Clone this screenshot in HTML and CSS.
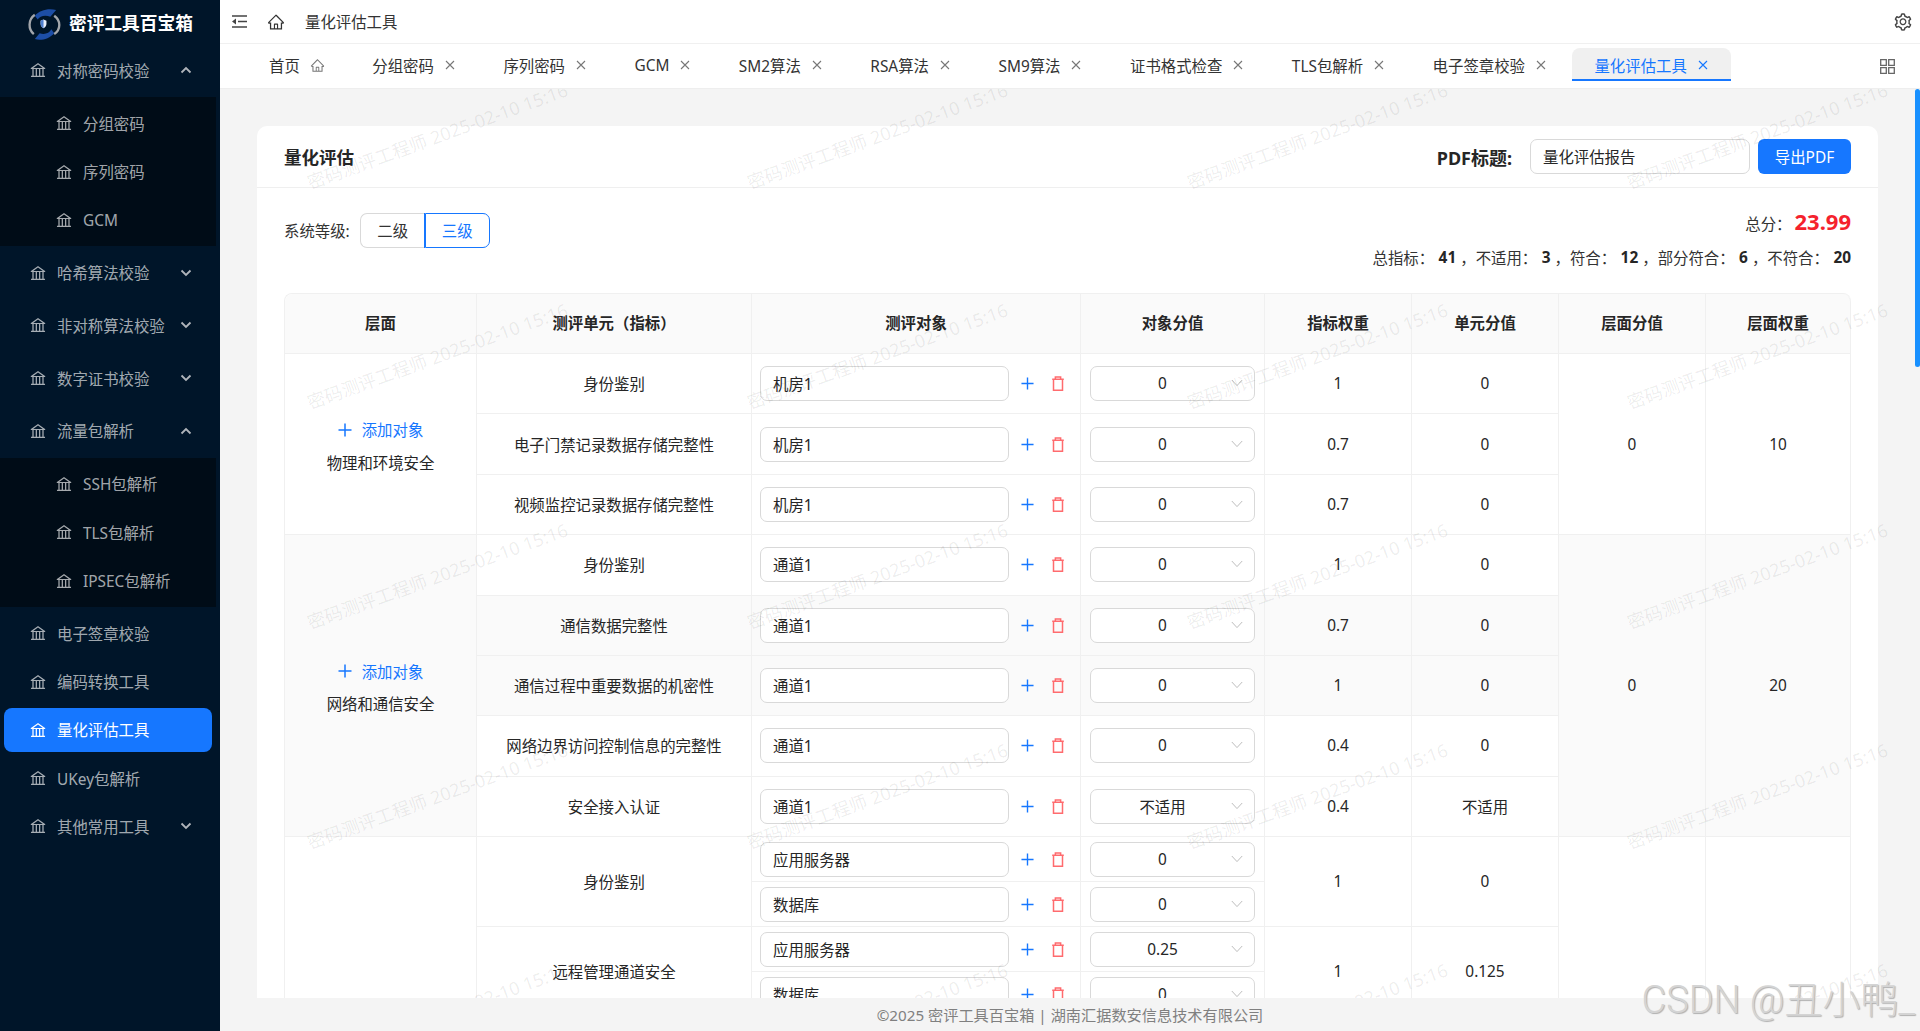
FILE: index.html
```html
<!DOCTYPE html>
<html lang="zh-CN">
<head>
<meta charset="utf-8">
<title>量化评估工具</title>
<link rel="stylesheet" href="styles.css">
</head>
<body>
<svg class="sprite" aria-hidden="true">
  <symbol id="bank" viewBox="0 0 1024 1024"><path fill="currentColor" d="M894 462c30.9 0 43.8-39.7 18.7-58L530.8 126.2a31.81 31.81 0 0 0-37.6 0L111.3 404c-25.1 18.2-12.2 58 18.8 58H192v374h-72c-4.4 0-8 3.6-8 8v52c0 4.4 3.6 8 8 8h784c4.4 0 8-3.6 8-8v-52c0-4.4-3.6-8-8-8h-72V462h62zM512 196.7l271.1 197.2H240.9L512 196.7zM264 462h117v374H264V462zm189 0h117v374H453V462zm307 374H642V462h118v374z"/></symbol>
  <symbol id="home" viewBox="0 0 1024 1024"><path fill="currentColor" d="M946.5 505L560.1 118.8l-25.9-25.9a31.5 31.5 0 0 0-44.4 0L77.5 505a63.9 63.9 0 0 0-18.8 46c.4 35.2 29.7 63.3 64.9 63.3h42.5V940h691.8V614.3h43.4c17.1 0 33.2-6.7 45.3-18.8a63.6 63.6 0 0 0 18.7-45.3c0-17-6.7-33.1-18.8-45.2zM568 868H456V664h112v204zm217.9-325.7V868H632V640c0-22.1-17.9-40-40-40H432c-22.1 0-40 17.9-40 40v228H238.1V542.3h-96l370-369.7 23.1 23.1L882 542.3h-96.1z"/></symbol>
  <symbol id="gear" viewBox="0 0 1024 1024"><path fill="currentColor" d="M924.8 625.7l-65.5-56c3.1-19 4.7-38.4 4.7-57.8s-1.6-38.8-4.7-57.8l65.5-56a32.03 32.03 0 0 0 9.3-35.2l-.9-2.6a443.74 443.74 0 0 0-79.7-137.9l-1.8-2.1a32.12 32.12 0 0 0-35.1-9.5l-81.3 28.9c-30-24.6-63.5-44-99.7-57.6l-15.7-85a32.05 32.05 0 0 0-25.8-25.7l-2.7-.5c-52.1-9.4-106.9-9.4-159 0l-2.7.5a32.05 32.05 0 0 0-25.8 25.7l-15.8 85.4a351.86 351.86 0 0 0-99 57.4l-81.9-29.1a32 32 0 0 0-35.1 9.5l-1.8 2.1a446.02 446.02 0 0 0-79.7 137.9l-.9 2.6c-4.5 12.5-.8 26.5 9.3 35.2l66.3 56.6c-3.1 18.8-4.6 38-4.6 57.1 0 19.2 1.5 38.4 4.6 57.1L99 625.5a32.03 32.03 0 0 0-9.3 35.2l.9 2.6c18.1 50.4 44.9 96.9 79.7 137.9l1.8 2.1a32.12 32.12 0 0 0 35.1 9.5l81.9-29.1c29.8 24.5 63.1 43.9 99 57.4l15.8 85.4a32.05 32.05 0 0 0 25.8 25.7l2.7.5a449.4 449.4 0 0 0 159 0l2.7-.5a32.05 32.05 0 0 0 25.8-25.7l15.7-85a350 350 0 0 0 99.7-57.6l81.3 28.9a32 32 0 0 0 35.1-9.5l1.8-2.1c34.8-41.1 61.6-87.5 79.7-137.9l.9-2.6c4.5-12.3.8-26.3-9.3-35zM788.3 465.9c2.5 15.1 3.8 30.6 3.8 46.1s-1.3 31-3.8 46.1l-6.6 40.1 74.7 63.9a370.03 370.03 0 0 1-42.6 73.6L721 702.8l-31.4 25.8c-23.9 19.6-50.5 35-79.3 45.8l-38.1 14.3-17.9 97a377.5 377.5 0 0 1-85 0l-17.9-97.2-37.8-14.5c-28.5-10.8-55-26.2-78.7-45.7l-31.4-25.9-93.4 33.2c-17-22.9-31.2-47.6-42.6-73.6l75.5-64.5-6.5-40c-2.4-14.9-3.7-30.3-3.7-45.5 0-15.3 1.2-30.6 3.7-45.5l6.5-40-75.5-64.5c11.3-26.1 25.6-50.7 42.6-73.6l93.4 33.2 31.4-25.9c23.7-19.5 50.2-34.9 78.7-45.7l37.9-14.3 17.9-97.2c28.1-3.2 56.8-3.2 85 0l17.9 97 38.1 14.3c28.7 10.8 55.4 26.2 79.3 45.8l31.4 25.8 92.8-32.9c17 22.9 31.2 47.6 42.6 73.6L781.8 426l6.5 39.9zM512 326c-97.2 0-176 78.8-176 176s78.8 176 176 176 176-78.8 176-176-78.8-176-176-176zm79.2 255.2A111.6 111.6 0 0 1 512 614c-29.9 0-58-11.7-79.2-32.8A111.6 111.6 0 0 1 400 502c0-29.9 11.7-58 32.8-79.2C454 401.6 482.1 390 512 390c29.9 0 58 11.6 79.2 32.8A111.6 111.6 0 0 1 624 502c0 29.9-11.7 58-32.8 79.2z"/></symbol>
  <symbol id="up" viewBox="0 0 12 8"><path d="M1.5 6.5 6 2l4.5 4.5" fill="none" stroke="currentColor" stroke-width="1.8"/></symbol>
  <symbol id="down" viewBox="0 0 12 8"><path d="M1.5 1.5 6 6l4.5-4.5" fill="none" stroke="currentColor" stroke-width="1.8"/></symbol>
  <symbol id="x" viewBox="0 0 12 12"><path d="M2 2l8 8M10 2l-8 8" fill="none" stroke="currentColor" stroke-width="1.1"/></symbol>
  <symbol id="plus" viewBox="0 0 14 14"><path d="M7 .5v13M.5 7h13" fill="none" stroke="currentColor" stroke-width="1.5"/></symbol>
  <symbol id="trash" viewBox="0 0 14 16"><path d="M.8 3.500h12.400M4.200 3.500V1h5.600v2.500M2.200 3.500v11.700h9.600V3.500" fill="none" stroke="currentColor" stroke-width="1.6"/></symbol>
  <symbol id="sel" viewBox="0 0 12 8"><path d="M.8 1 6 6.6 11.2 1" fill="none" stroke="currentColor" stroke-width="1"/></symbol>
</svg>

<aside class="sidebar">
  <div class="logo">
    <svg class="logo-mark" viewBox="8 4 34 34" aria-hidden="true">
      <path d="M15 12C8 17 8 27 14 32" fill="none" stroke="#a3a6ab" stroke-width="2.4"/>
      <path d="M35 13C42 18 42 27 35 32" fill="none" stroke="#a3a6ab" stroke-width="2.4"/>
      <path d="M15 13C20 7 29 5 37 7L31 14C26 12 20 13 18 17Z" fill="#1d4ea6"/>
      <path d="M35 31C30 37 21 39 15 37L20 31C25 33 30 31 32 27Z" fill="#1d4ea6"/>
      <path d="M24 17l3 1.200v3.300c0 2-1.300 3.400-3 4.500-1.700-1.100-3-2.500-3-4.500v-3.300Z" fill="#e8eefb"/>
      <path d="M24 17v9c-1.700-1.100-3-2.500-3-4.500v-3.300Z" fill="#4f7fd0"/>
    </svg>
    <span class="logo-text">密评工具百宝箱</span>
  </div>
  <nav class="menu">
    <div class="group open">
      <div class="item"><svg class="ic"><use href="#bank"/></svg><span>对称密码校验</span><svg class="chev"><use href="#up"/></svg></div>
      <div class="sub">
        <div class="item subitem"><svg class="ic"><use href="#bank"/></svg><span>分组密码</span></div>
        <div class="item subitem"><svg class="ic"><use href="#bank"/></svg><span>序列密码</span></div>
        <div class="item subitem"><svg class="ic"><use href="#bank"/></svg><span>GCM</span></div>
      </div>
    </div>
    <div class="group"><div class="item"><svg class="ic"><use href="#bank"/></svg><span>哈希算法校验</span><svg class="chev"><use href="#down"/></svg></div></div>
    <div class="group"><div class="item"><svg class="ic"><use href="#bank"/></svg><span>非对称算法校验</span><svg class="chev"><use href="#down"/></svg></div></div>
    <div class="group"><div class="item"><svg class="ic"><use href="#bank"/></svg><span>数字证书校验</span><svg class="chev"><use href="#down"/></svg></div></div>
    <div class="group open">
      <div class="item"><svg class="ic"><use href="#bank"/></svg><span>流量包解析</span><svg class="chev"><use href="#up"/></svg></div>
      <div class="sub">
        <div class="item subitem"><svg class="ic"><use href="#bank"/></svg><span>SSH包解析</span></div>
        <div class="item subitem"><svg class="ic"><use href="#bank"/></svg><span>TLS包解析</span></div>
        <div class="item subitem"><svg class="ic"><use href="#bank"/></svg><span>IPSEC包解析</span></div>
      </div>
    </div>
    <div class="item flat"><svg class="ic"><use href="#bank"/></svg><span>电子签章校验</span></div>
    <div class="item flat"><svg class="ic"><use href="#bank"/></svg><span>编码转换工具</span></div>
    <div class="item flat active"><svg class="ic"><use href="#bank"/></svg><span>量化评估工具</span></div>
    <div class="item flat"><svg class="ic"><use href="#bank"/></svg><span>UKey包解析</span></div>
    <div class="item flat"><svg class="ic"><use href="#bank"/></svg><span>其他常用工具</span><svg class="chev"><use href="#down"/></svg></div>
  </nav>
</aside>

<div class="main">
  <header class="topbar">
    <svg class="collapse" viewBox="0 0 15 13" aria-hidden="true"><path d="M0 1h15M6 6.500h9M0 12h15" fill="none" stroke="#444" stroke-width="1.400"/><path d="M4 3.500v6L0 6.500Z" fill="#444"/></svg>
    <svg class="home"><use href="#home"/></svg>
    <span class="crumb">量化评估工具</span>
    <svg class="gear"><use href="#gear"/></svg>
  </header>
  <div class="tabs">
    <div class="tab"><span>首页</span><svg class="tab-home"><use href="#home"/></svg></div>
    <div class="tab"><span>分组密码</span><svg class="tab-x"><use href="#x"/></svg></div>
    <div class="tab"><span>序列密码</span><svg class="tab-x"><use href="#x"/></svg></div>
    <div class="tab"><span>GCM</span><svg class="tab-x"><use href="#x"/></svg></div>
    <div class="tab"><span>SM2算法</span><svg class="tab-x"><use href="#x"/></svg></div>
    <div class="tab"><span>RSA算法</span><svg class="tab-x"><use href="#x"/></svg></div>
    <div class="tab"><span>SM9算法</span><svg class="tab-x"><use href="#x"/></svg></div>
    <div class="tab"><span>证书格式检查</span><svg class="tab-x"><use href="#x"/></svg></div>
    <div class="tab"><span>TLS包解析</span><svg class="tab-x"><use href="#x"/></svg></div>
    <div class="tab"><span>电子签章校验</span><svg class="tab-x"><use href="#x"/></svg></div>
    <div class="tab current"><span>量化评估工具</span><svg class="tab-x"><use href="#x"/></svg></div>
    <svg class="grid-ic" viewBox="0 0 15 15" aria-hidden="true"><path d="M.7.700h5.600v5.600H.7zM8.700.700h5.600v5.600H8.700zM.7 8.700h5.600v5.600H.7zM8.700 8.700h5.600v5.600H8.700z" fill="none" stroke="#666" stroke-width="1.300"/></svg>
  </div>

  <div class="content">
    <section class="card">
      <div class="card-head">
        <h1 class="card-title">量化评估</h1>
        <div class="head-tools">
          <span class="pdf-label">PDF标题:</span>
          <div class="field pdf-input">量化评估报告</div>
          <div class="btn">导出PDF</div>
        </div>
      </div>
      <div class="card-body">
        <div class="summary">
          <div class="level">
            <span>系统等级:</span>
            <div class="seg"><span class="seg-a">二级</span><span class="seg-b">三级</span></div>
          </div>
          <div class="score">
            <div class="total"><span>总分：</span><b>23.99</b></div>
            <div class="stats"><span>总指标：</span><b>41</b><span>，</span><span>不适用：</span><b>3</b><span>，</span><span>符合：</span><b>12</b><span>，</span><span>部分符合：</span><b>6</b><span>，</span><span>不符合：</span><b>20</b></div>
          </div>
        </div>
        <table class="sheet">
          <thead>
            <tr>
              <th class="c-layer">层面</th><th class="c-unit">测评单元（指标）</th><th class="c-obj">测评对象</th><th class="c-val">对象分值</th><th class="c-num">指标权重</th><th class="c-num">单元分值</th><th class="c-num">层面分值</th><th class="c-last">层面权重</th>
            </tr>
          </thead>
          <tbody>
            <tr class="row">
              <td rowspan="3"><div class="adder"><svg class="add-plus"><use href="#plus"/></svg><span>添加对象</span></div><div class="layer-name">物理和环境安全</div></td>
              <td>身份鉴别</td>
              <td><div class="obj"><div class="field obj-input">机房1</div><svg class="act-plus"><use href="#plus"/></svg><svg class="act-del"><use href="#trash"/></svg></div></td>
              <td><div class="field pick"><span>0</span><svg class="pick-ic"><use href="#sel"/></svg></div></td>
              <td>1</td><td>0</td><td rowspan="3">0</td><td rowspan="3">10</td>
            </tr>
            <tr class="row">
              <td>电子门禁记录数据存储完整性</td>
              <td><div class="obj"><div class="field obj-input">机房1</div><svg class="act-plus"><use href="#plus"/></svg><svg class="act-del"><use href="#trash"/></svg></div></td>
              <td><div class="field pick"><span>0</span><svg class="pick-ic"><use href="#sel"/></svg></div></td>
              <td>0.7</td><td>0</td>
            </tr>
            <tr class="row">
              <td>视频监控记录数据存储完整性</td>
              <td><div class="obj"><div class="field obj-input">机房1</div><svg class="act-plus"><use href="#plus"/></svg><svg class="act-del"><use href="#trash"/></svg></div></td>
              <td><div class="field pick"><span>0</span><svg class="pick-ic"><use href="#sel"/></svg></div></td>
              <td>0.7</td><td>0</td>
            </tr>
            <tr class="row">
              <td rowspan="5" class="shade"><div class="adder"><svg class="add-plus"><use href="#plus"/></svg><span>添加对象</span></div><div class="layer-name">网络和通信安全</div></td>
              <td>身份鉴别</td>
              <td><div class="obj"><div class="field obj-input">通道1</div><svg class="act-plus"><use href="#plus"/></svg><svg class="act-del"><use href="#trash"/></svg></div></td>
              <td><div class="field pick"><span>0</span><svg class="pick-ic"><use href="#sel"/></svg></div></td>
              <td>1</td><td>0</td><td rowspan="5" class="shade">0</td><td rowspan="5" class="shade">20</td>
            </tr>
            <tr class="row hot">
              <td>通信数据完整性</td>
              <td><div class="obj"><div class="field obj-input">通道1</div><svg class="act-plus"><use href="#plus"/></svg><svg class="act-del"><use href="#trash"/></svg></div></td>
              <td><div class="field pick"><span>0</span><svg class="pick-ic"><use href="#sel"/></svg></div></td>
              <td>0.7</td><td>0</td>
            </tr>
            <tr class="row hot">
              <td>通信过程中重要数据的机密性</td>
              <td><div class="obj"><div class="field obj-input">通道1</div><svg class="act-plus"><use href="#plus"/></svg><svg class="act-del"><use href="#trash"/></svg></div></td>
              <td><div class="field pick"><span>0</span><svg class="pick-ic"><use href="#sel"/></svg></div></td>
              <td>1</td><td>0</td>
            </tr>
            <tr class="row">
              <td>网络边界访问控制信息的完整性</td>
              <td><div class="obj"><div class="field obj-input">通道1</div><svg class="act-plus"><use href="#plus"/></svg><svg class="act-del"><use href="#trash"/></svg></div></td>
              <td><div class="field pick"><span>0</span><svg class="pick-ic"><use href="#sel"/></svg></div></td>
              <td>0.4</td><td>0</td>
            </tr>
            <tr class="row">
              <td>安全接入认证</td>
              <td><div class="obj"><div class="field obj-input">通道1</div><svg class="act-plus"><use href="#plus"/></svg><svg class="act-del"><use href="#trash"/></svg></div></td>
              <td><div class="field pick"><span>不适用</span><svg class="pick-ic"><use href="#sel"/></svg></div></td>
              <td>0.4</td><td>不适用</td>
            </tr>
            <tr class="mini">
              <td rowspan="4"></td>
              <td rowspan="2">身份鉴别</td>
              <td><div class="obj"><div class="field obj-input">应用服务器</div><svg class="act-plus"><use href="#plus"/></svg><svg class="act-del"><use href="#trash"/></svg></div></td>
              <td><div class="field pick"><span>0</span><svg class="pick-ic"><use href="#sel"/></svg></div></td>
              <td rowspan="2">1</td><td rowspan="2">0</td><td rowspan="4"></td><td rowspan="4"></td>
            </tr>
            <tr class="mini">
              <td><div class="obj"><div class="field obj-input">数据库</div><svg class="act-plus"><use href="#plus"/></svg><svg class="act-del"><use href="#trash"/></svg></div></td>
              <td><div class="field pick"><span>0</span><svg class="pick-ic"><use href="#sel"/></svg></div></td>
            </tr>
            <tr class="mini">
              <td rowspan="2">远程管理通道安全</td>
              <td><div class="obj"><div class="field obj-input">应用服务器</div><svg class="act-plus"><use href="#plus"/></svg><svg class="act-del"><use href="#trash"/></svg></div></td>
              <td><div class="field pick"><span>0.25</span><svg class="pick-ic"><use href="#sel"/></svg></div></td>
              <td rowspan="2">1</td><td rowspan="2">0.125</td>
            </tr>
            <tr class="mini">
              <td><div class="obj"><div class="field obj-input">数据库</div><svg class="act-plus"><use href="#plus"/></svg><svg class="act-del"><use href="#trash"/></svg></div></td>
              <td><div class="field pick"><span>0</span><svg class="pick-ic"><use href="#sel"/></svg></div></td>
            </tr>
          </tbody>
        </table>
      </div>
    </section>

    <div class="marks" aria-hidden="true">
      <span>密码测评工程师 2025-02-10 15:16</span><span>密码测评工程师 2025-02-10 15:16</span><span>密码测评工程师 2025-02-10 15:16</span><span>密码测评工程师 2025-02-10 15:16</span>
      <span>密码测评工程师 2025-02-10 15:16</span><span>密码测评工程师 2025-02-10 15:16</span><span>密码测评工程师 2025-02-10 15:16</span><span>密码测评工程师 2025-02-10 15:16</span>
      <span>密码测评工程师 2025-02-10 15:16</span><span>密码测评工程师 2025-02-10 15:16</span><span>密码测评工程师 2025-02-10 15:16</span><span>密码测评工程师 2025-02-10 15:16</span>
      <span>密码测评工程师 2025-02-10 15:16</span><span>密码测评工程师 2025-02-10 15:16</span><span>密码测评工程师 2025-02-10 15:16</span><span>密码测评工程师 2025-02-10 15:16</span>
      <span>密码测评工程师 2025-02-10 15:16</span><span>密码测评工程师 2025-02-10 15:16</span><span>密码测评工程师 2025-02-10 15:16</span><span>密码测评工程师 2025-02-10 15:16</span>
    </div>
    <div class="thumb"></div>
  </div>

  <footer class="foot">©2025 密评工具百宝箱 | 湖南汇据数安信息技术有限公司</footer>
</div>
<div class="csdn">CSDN @丑小鸭_</div>
</body>
</html>
```
FILE: styles.css
```css
* { box-sizing: border-box; }
html, body { height: 100%; }
body {
  margin: 0;
  display: flex;
  height: 1031px;
  overflow: hidden;
  font-family: "Noto Sans", "Noto Sans CJK SC", sans-serif;
  font-size: 15.4px;
  color: #262626;
  background: #f4f4f4;
}
.sprite { display: none; }

/* sidebar */
.sidebar { width: 220px; flex: none; background: #001529; color: rgba(255,255,255,.65); }
.logo { height: 48px; padding: 7px 0 0 28px; display: flex; align-items: flex-start; gap: 8px; }
.logo-mark { width: 33px; height: 33px; flex: none; }
.logo-text { font-size: 17.7px; font-weight: 700; color: #fff; line-height: 32px; white-space: nowrap; }
.menu { width: 216px; }
.group { margin-bottom: 8.75px; }
.group.open { margin-bottom: 4.5px; }
.item { height: 44px; display: flex; align-items: center; padding-left: 25px; margin: 0 4px; border-radius: 8px; position: relative; white-space: nowrap; }
.flat { margin-bottom: 4.25px; }
.ic { width: 18px; height: 18px; margin-right: 10px; flex: none; }
.chev { width: 12px; height: 8px; position: absolute; left: 176px; top: 18px; color: #b0b5bb; }
.group > .item { margin-bottom: 0; }
.sub { background: #000c17; margin-top: 5px; padding-top: 4px; display: flex; flex-direction: column; gap: 4.5px; height: 149px; }
.subitem { padding-left: 51px; }
.active { background: #1677ff; color: #fff; }

/* main */
.main { width: 1700px; flex: none; display: flex; flex-direction: column; height: 1031px; }
.topbar { height: 44px; flex: none; background: #fff; border-bottom: 1px solid #f0f0f0; display: flex; align-items: center; padding-left: 12px; }
.collapse { width: 15px; height: 13px; margin-right: 20px; }
.home { width: 18px; height: 18px; color: #333; margin-right: 20px; }
.crumb { color: #333; }
.gear { width: 20px; height: 20px; margin-left: auto; margin-right: 7px; color: #444; }
.tabs { height: 45px; flex: none; background: #fff; border-bottom: 1px solid #eee; display: flex; align-items: flex-start; padding: 4px 0 0 27px; gap: 3.5px; position: relative; }
.tab { height: 33px; padding: 3.5px 22px 0; display: flex; align-items: center; gap: 10px; color: #333; white-space: nowrap; border-bottom: 2px solid transparent; }
.tab-home { width: 15px; height: 15px; color: #777; }
.tab-x { width: 12px; height: 12px; color: #777; }
.current { background: #f0f0f0; color: #1677ff; border-bottom-color: #1677ff; border-radius: 8px 8px 0 0; }
.current .tab-x { color: #1677ff; }
.grid-ic { width: 15px; height: 15px; position: absolute; left: 1660px; top: 15px; }

/* content */
.content { flex: 1; min-height: 0; overflow: hidden; position: relative; padding: 37px 42px 0 37px; }
.card { background: #fff; border-radius: 10px 10px 0 0; height: 900px; overflow: hidden; }
.card-head { height: 62px; border-bottom: 1px solid #efefef; display: flex; align-items: center; justify-content: space-between; padding: 0 27px; }
.card-title { margin: 0; font-size: 17.5px; font-weight: 700; color: #262626; }
.head-tools { display: flex; align-items: center; }
.pdf-label { font-size: 18px; font-weight: 700; margin-right: 18px; white-space: nowrap; }
.field { border: 1px solid #d9d9d9; border-radius: 7px; background: #fff; display: flex; align-items: center; }
.pdf-input { width: 220px; height: 35px; padding-left: 12px; margin-right: 8px; }
.btn { width: 93px; height: 35px; background: #1677ff; color: #fff; border-radius: 6px; display: flex; align-items: center; justify-content: center; }
.card-body { padding: 0 27px; }
.summary { height: 105px; display: flex; justify-content: space-between; align-items: flex-start; }
.level { display: flex; align-items: center; gap: 10px; margin-top: 25px; color: #333; white-space: nowrap; }
.seg { display: flex; height: 35px; }
.seg span { width: 65px; display: flex; align-items: center; justify-content: center; }
.seg-a { border: 1px solid #d9d9d9; border-right: 0; border-radius: 7px 0 0 7px; }
.seg-b { border: 1px solid #1677ff; color: #1677ff; border-radius: 0 7px 7px 0; box-shadow: -1px 0 0 #1677ff; }
.score { padding-top: 19px; display: flex; flex-direction: column; align-items: flex-end; white-space: nowrap; }
.total { display: flex; align-items: center; height: 28px; }
.total span { margin-right: 3px; padding-top: 4px; color: #333; }
.total b { font-size: 22px; color: #f5222d; font-weight: 700; }
.stats { margin-top: 10px; height: 24px; display: flex; align-items: center; color: #333; }
.stats b { font-weight: 700; margin: 0 4px 0 4.5px; color: #262626; }
.stats b:last-child { margin-right: 0; }

/* table */
.sheet { width: 1567px; table-layout: fixed; border-collapse: separate; border-spacing: 0; border-top: 1px solid #f0f0f0; border-left: 1px solid #f0f0f0; border-radius: 8px 8px 0 0; }
.sheet th, .sheet td { border-right: 1px solid #f0f0f0; border-bottom: 1px solid #f0f0f0; text-align: center; padding: 0; font-weight: 400; }
.sheet th { height: 60px; padding-bottom: 2px; background: #fafafa; font-weight: 700; color: #262626; }
.sheet th:first-child { border-top-left-radius: 8px; }
.sheet th:last-child { border-top-right-radius: 8px; }
.c-layer { width: 192px; }
.c-unit { width: 275px; }
.c-obj { width: 329px; }
.c-val { width: 184px; }
.c-num { width: 147px; }
.c-last { width: 145px; }
.row td { height: 60.375px; }
.mini td { height: 45px; }
.hot td, .shade { background: #fafafa; }
.adder { display: flex; align-items: center; justify-content: center; height: 34px; color: #1677ff; gap: 10px; }
.add-plus { width: 14px; height: 14px; }
.layer-name { margin-top: 5px; line-height: 24px; }
.obj { display: flex; align-items: center; padding-left: 8px; }
.obj-input { width: 249px; height: 35px; padding-left: 12px; }
.act-plus { width: 13px; height: 13px; margin-left: 12px; color: #1677ff; flex: none; }
.act-del { width: 14px; height: 15px; margin-left: 17px; color: #ff6b6e; flex: none; }
.pick { width: 165px; height: 35px; margin-left: 9px; position: relative; justify-content: center; padding-right: 20px; }
.pick-ic { width: 12px; height: 8px; position: absolute; right: 11px; top: 12px; color: #bdbdbd; }

/* watermark + overlays */
.marks { position: absolute; left: -3px; top: -64px; width: 1760px; display: grid; grid-template-columns: repeat(4, 440px); grid-auto-rows: 220px; pointer-events: none; }
.marks span { display: flex; align-items: center; justify-content: center; white-space: nowrap; transform: rotate(-20deg); font-size: 18px; color: rgba(0,0,0,.08); }
.thumb { position: absolute; right: 0; top: 0; width: 5px; height: 278px; background: #1890ff; border-radius: 3px; }
.foot { height: 33px; flex: none; background: #f4f4f4; display: flex; align-items: center; justify-content: center; color: #808080; font-size: 15.2px; padding-bottom: 2px; position: relative; }
.csdn { position: absolute; right: 5px; top: 976px; font-family: "Roboto", "Noto Sans CJK SC", sans-serif; font-weight: 300; font-size: 38px; line-height: 48px; color: #d4d4d4; text-shadow: 1px 1px 1px #b0b0b0; white-space: nowrap; }
```
